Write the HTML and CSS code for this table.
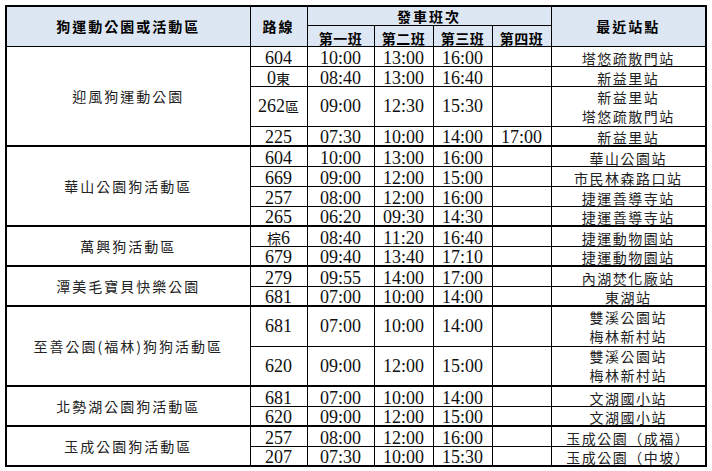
FILE: index.html
```html
<!DOCTYPE html>
<html lang="zh-Hant">
<head>
<meta charset="utf-8">
<title>狗運動公園公車班次</title>
<link rel="stylesheet" href="styles.css">
</head>
<body>
<table class="sched">
  <colgroup>
    <col class="c-park">
    <col class="c-route">
    <col class="c-t1">
    <col class="c-t">
    <col class="c-t">
    <col class="c-t">
    <col class="c-stop">
  </colgroup>
  <thead>
    <tr class="h1">
      <th rowspan="2" class="hd">狗運動公園或活動區</th>
      <th rowspan="2" class="hd">路線</th>
      <th colspan="4" class="hd">發車班次</th>
      <th rowspan="2" class="hd">最近站點</th>
    </tr>
    <tr class="h2">
      <th class="sub">第一班</th>
      <th class="sub">第二班</th>
      <th class="sub">第三班</th>
      <th class="sub">第四班</th>
    </tr>
  </thead>
  <tbody>
    <tr>
      <td rowspan="4" class="park">迎風狗運動公園</td>
      <td class="num">604</td><td class="num">10:00</td><td class="num">13:00</td><td class="num">16:00</td><td class="num"></td>
      <td class="stop">塔悠疏散門站</td>
    </tr>
    <tr>
      <td class="num">0<span class="cjk">東</span></td><td class="num">08:40</td><td class="num">13:00</td><td class="num">16:40</td><td class="num"></td>
      <td class="stop">新益里站</td>
    </tr>
    <tr class="dbl">
      <td class="num mid">262<span class="cjk">區</span></td><td class="num mid">09:00</td><td class="num mid">12:30</td><td class="num mid">15:30</td><td class="num"></td>
      <td class="stop two">新益里站<br>塔悠疏散門站</td>
    </tr>
    <tr>
      <td class="num">225</td><td class="num">07:30</td><td class="num">10:00</td><td class="num">14:00</td><td class="num">17:00</td>
      <td class="stop">新益里站</td>
    </tr>

    <tr class="grp">
      <td rowspan="4" class="park">華山公園狗活動區</td>
      <td class="num">604</td><td class="num">10:00</td><td class="num">13:00</td><td class="num">16:00</td><td class="num"></td>
      <td class="stop">華山公園站</td>
    </tr>
    <tr>
      <td class="num">669</td><td class="num">09:00</td><td class="num">12:00</td><td class="num">15:00</td><td class="num"></td>
      <td class="stop">市民林森路口站</td>
    </tr>
    <tr>
      <td class="num">257</td><td class="num">08:00</td><td class="num">12:00</td><td class="num">16:00</td><td class="num"></td>
      <td class="stop">捷運善導寺站</td>
    </tr>
    <tr>
      <td class="num">265</td><td class="num">06:20</td><td class="num">09:30</td><td class="num">14:30</td><td class="num"></td>
      <td class="stop">捷運善導寺站</td>
    </tr>

    <tr class="grp">
      <td rowspan="2" class="park">萬興狗活動區</td>
      <td class="num"><span class="cjk">棕</span>6</td><td class="num">08:40</td><td class="num">11:20</td><td class="num">16:40</td><td class="num"></td>
      <td class="stop">捷運動物園站</td>
    </tr>
    <tr>
      <td class="num">679</td><td class="num">09:40</td><td class="num">13:40</td><td class="num">17:10</td><td class="num"></td>
      <td class="stop">捷運動物園站</td>
    </tr>

    <tr class="grp">
      <td rowspan="2" class="park">潭美毛寶貝快樂公園</td>
      <td class="num">279</td><td class="num">09:55</td><td class="num">14:00</td><td class="num">17:00</td><td class="num"></td>
      <td class="stop">內湖焚化廠站</td>
    </tr>
    <tr>
      <td class="num">681</td><td class="num">07:00</td><td class="num">10:00</td><td class="num">14:00</td><td class="num"></td>
      <td class="stop">東湖站</td>
    </tr>

    <tr class="grp dbl">
      <td rowspan="2" class="park">至善公園(福林)狗狗活動區</td>
      <td class="num mid">681</td><td class="num mid">07:00</td><td class="num mid">10:00</td><td class="num mid">14:00</td><td class="num"></td>
      <td class="stop two">雙溪公園站<br>梅林新村站</td>
    </tr>
    <tr class="dbl">
      <td class="num mid">620</td><td class="num mid">09:00</td><td class="num mid">12:00</td><td class="num mid">15:00</td><td class="num"></td>
      <td class="stop two">雙溪公園站<br>梅林新村站</td>
    </tr>

    <tr class="grp">
      <td rowspan="2" class="park">北勢湖公園狗活動區</td>
      <td class="num">681</td><td class="num">07:00</td><td class="num">10:00</td><td class="num">14:00</td><td class="num"></td>
      <td class="stop">文湖國小站</td>
    </tr>
    <tr>
      <td class="num">620</td><td class="num">09:00</td><td class="num">12:00</td><td class="num">15:00</td><td class="num"></td>
      <td class="stop">文湖國小站</td>
    </tr>

    <tr class="grp">
      <td rowspan="2" class="park">玉成公園狗活動區</td>
      <td class="num">257</td><td class="num">08:00</td><td class="num">12:00</td><td class="num">16:00</td><td class="num"></td>
      <td class="stop">玉成公園（成福）</td>
    </tr>
    <tr>
      <td class="num">207</td><td class="num">07:30</td><td class="num">10:00</td><td class="num">15:30</td><td class="num"></td>
      <td class="stop">玉成公園（中坡）</td>
    </tr>
  </tbody>
</table>
</body>
</html>
```

FILE: styles.css
```css
html, body {
  margin: 0;
  padding: 0;
  background: #ffffff;
}

body {
  padding: 5px 0 0 5px;
  font-family: "Liberation Serif", "Noto Sans CJK TC", serif;
  color: #111;
}

.sched {
  border-collapse: collapse;
  table-layout: fixed;
  width: 699px;
  border: 2px solid #000;
}

.c-park { width: 244px; }
.c-route { width: 57px; }
.c-t1 { width: 67px; }
.c-t { width: 59px; }
.c-stop { width: 155px; }

.sched th,
.sched td {
  border: 1px solid #000;
  padding: 0;
  text-align: center;
  white-space: nowrap;
  overflow: hidden;
}

.sched th {
  background: #dde7f3;
  font-family: "Noto Sans CJK TC", sans-serif;
  font-weight: 700;
  color: #000;
}

.h1 { height: 19px; }
.h2 { height: 21px; }

.hd {
  font-size: 14px;
  letter-spacing: 2px;
  line-height: 16px;
  vertical-align: middle;
}

.sub {
  font-size: 14px;
  letter-spacing: 0.5px;
  line-height: 16px;
  vertical-align: bottom;
}

.sched tbody tr { height: 20px; }
.sched tbody tr.dbl { height: 40px; }

.grp > td { border-top: 2px solid #000; }

.park {
  font-family: "Noto Sans CJK TC", sans-serif;
  font-size: 14px;
  letter-spacing: 2px;
  line-height: 18px;
  color: #222;
  vertical-align: middle;
}

.num {
  font-size: 18px;
  line-height: 16px;
  vertical-align: bottom;
}

.num.mid { vertical-align: middle; }

.cjk {
  font-family: "Noto Sans CJK TC", sans-serif;
  font-size: 14px;
}

.stop {
  font-family: "Noto Sans CJK TC", sans-serif;
  font-size: 14px;
  letter-spacing: 1.5px;
  line-height: 16px;
  color: #222;
  vertical-align: bottom;
}

.stop.two { line-height: 19px; }
```
